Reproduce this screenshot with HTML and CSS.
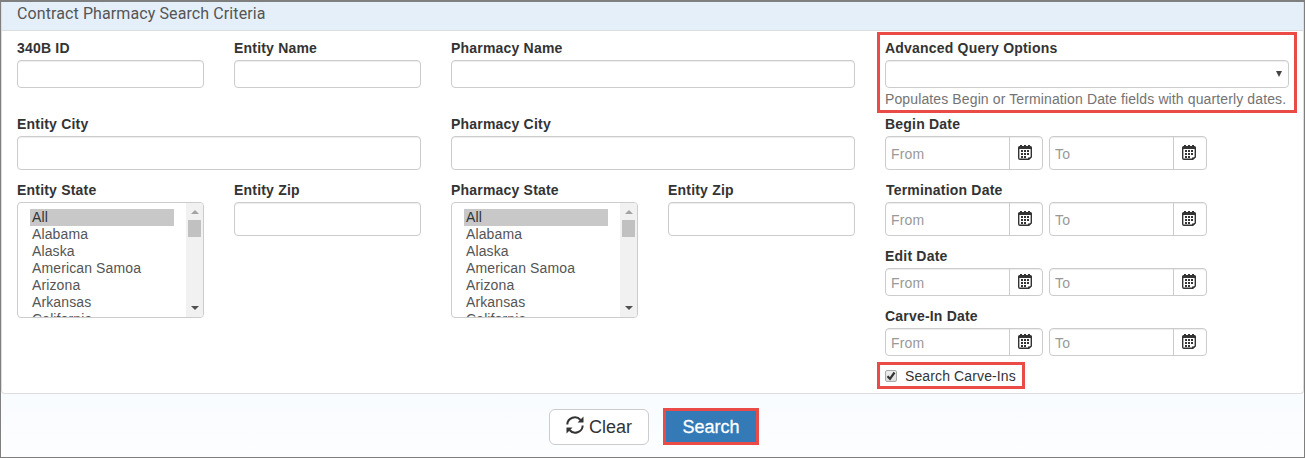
FILE: index.html
```html
<!DOCTYPE html>
<html lang="en">
<head>
    <meta charset="UTF-8">
    <meta name="viewport" content="width=device-width, initial-scale=1.0">
    <title>Contract Pharmacy Search</title>
    <link rel="stylesheet" href="styles.css">
</head>
<body>
    <svg width="0" height="0" class="defs">
        <symbol id="calendar" viewBox="0 0 14 15">
            <path fill="#333" d="M1.500 1H2V0h2v1h2V0h2v1h2V0h2v1h.5Q14 1 14 2.500V4H0V2.500Q0 1 1.500 1z"/>
            <path fill="none" stroke="#333" stroke-width="1.400" d="M.7 3v10q0 1.300 1.300 1.300h8.800L13.300 12V3"/>
            <path fill="#333" d="M10 15v-2.500h3.500z"/>
            <path fill="#333" d="M6 5h2v2H6zM9 5h2v2H9zM3 8h2v2H3zM6 8h2v2H6zM9 8h2v2H9zM3 11h2v2H3zM6 11h2v2H6z"/>
            <path fill="#333" d="M3 5h2v2H3z"/>
        </symbol>
    </svg>
    <div class="page">
        <div class="panel">
            <div class="panel-heading">Contract Pharmacy Search Criteria</div>
            <div class="panel-body">
                <div class="criteria">
                    <div class="field">
                        <label for="id340b">340B ID</label>
                        <input id="id340b" class="control small" type="text">
                    </div>
                    <div class="field">
                        <label for="entity-name">Entity Name</label>
                        <input id="entity-name" class="control small" type="text">
                    </div>
                    <div class="field wide">
                        <label for="pharmacy-name">Pharmacy Name</label>
                        <input id="pharmacy-name" class="control small" type="text">
                    </div>
                    <div class="field wide">
                        <label for="entity-city">Entity City</label>
                        <input id="entity-city" class="control" type="text">
                    </div>
                    <div class="field wide">
                        <label for="pharmacy-city">Pharmacy City</label>
                        <input id="pharmacy-city" class="control" type="text">
                    </div>
                    <div class="field">
                        <label>Entity State</label>
                        <div class="listbox">
                            <ul class="options">
                                <li class="selected">All</li>
                                <li>Alabama</li>
                                <li>Alaska</li>
                                <li>American Samoa</li>
                                <li>Arizona</li>
                                <li>Arkansas</li>
                                <li>California</li>
                            </ul>
                            <div class="scrollbar">
                                <span class="arrow-up"></span>
                                <span class="thumb"></span>
                                <span class="arrow-down"></span>
                            </div>
                        </div>
                    </div>
                    <div class="field">
                        <label for="entity-zip">Entity Zip</label>
                        <input id="entity-zip" class="control" type="text">
                    </div>
                    <div class="field">
                        <label>Pharmacy State</label>
                        <div class="listbox">
                            <ul class="options">
                                <li class="selected">All</li>
                                <li>Alabama</li>
                                <li>Alaska</li>
                                <li>American Samoa</li>
                                <li>Arizona</li>
                                <li>Arkansas</li>
                                <li>California</li>
                            </ul>
                            <div class="scrollbar">
                                <span class="arrow-up"></span>
                                <span class="thumb"></span>
                                <span class="arrow-down"></span>
                            </div>
                        </div>
                    </div>
                    <div class="field">
                        <label for="pharmacy-zip">Entity Zip</label>
                        <input id="pharmacy-zip" class="control" type="text">
                    </div>
                </div>

                <div class="dates">
                    <div class="advanced highlight">
                        <label>Advanced Query Options</label>
                        <div class="control small dropdown"><span class="caret"></span></div>
                        <p class="help">Populates Begin or Termination Date fields with quarterly dates.</p>
                    </div>
                    <div class="date-field">
                        <label>Begin Date</label>
                        <div class="date-range">
                            <div class="date-input"><input type="text" placeholder="From"><button><svg><use href="#calendar"/></svg></button></div>
                            <div class="date-input"><input type="text" placeholder="To"><button><svg><use href="#calendar"/></svg></button></div>
                        </div>
                    </div>
                    <div class="date-field">
                        <label class="nudge">Termination Date</label>
                        <div class="date-range">
                            <div class="date-input"><input type="text" placeholder="From"><button><svg><use href="#calendar"/></svg></button></div>
                            <div class="date-input"><input type="text" placeholder="To"><button><svg><use href="#calendar"/></svg></button></div>
                        </div>
                    </div>
                    <div class="date-field">
                        <label>Edit Date</label>
                        <div class="date-range short">
                            <div class="date-input"><input type="text" placeholder="From"><button><svg><use href="#calendar"/></svg></button></div>
                            <div class="date-input"><input type="text" placeholder="To"><button><svg><use href="#calendar"/></svg></button></div>
                        </div>
                    </div>
                    <div class="date-field">
                        <label>Carve-In Date</label>
                        <div class="date-range short">
                            <div class="date-input"><input type="text" placeholder="From"><button><svg><use href="#calendar"/></svg></button></div>
                            <div class="date-input"><input type="text" placeholder="To"><button><svg><use href="#calendar"/></svg></button></div>
                        </div>
                    </div>
                    <div class="carve-ins highlight">
                        <span class="checkbox">
                            <svg viewBox="0 0 10 10"><path d="M1.500 5.200L4 7.800L8.500 1.500" fill="none" stroke="#333" stroke-width="2.200"/></svg>
                        </span>
                        <span>Search Carve-Ins</span>
                    </div>
                </div>
            </div>
        </div>

        <div class="actions">
            <button class="clear-button">
                <svg viewBox="0 0 18 18">
                    <path d="M1.300 8.500A7.500 7.500 0 0 1 14.500 4M16.700 9.500A7.500 7.500 0 0 1 3.500 14" fill="none" stroke="#333" stroke-width="2"/>
                    <path d="M17.500 .5V6.500h-6zM.5 17.500V11.500h6z" fill="#333"/>
                </svg>
                <span>Clear</span>
            </button>
            <button class="search-button">Search</button>
        </div>
    </div>
</body>
</html>
```

FILE: styles.css
```css
* {
    box-sizing: border-box;
}

body {
    margin: 0;
    font-family: Arial, "Liberation Sans", sans-serif;
    font-size: 14px;
    line-height: 20px;
    letter-spacing: 0.12px;
    color: #333;
}

.defs {
    display: block;
}

.page {
    height: 458px;
    border: 1px solid #7f7f7f;
    border-top-width: 2px;
    background: linear-gradient(#f8fbff 85%, #fcfeff);
    overflow: hidden;
}

.panel {
    height: 392px;
    background-color: #fff;
    border: 1px solid #ddd;
    border-top: none;
    border-radius: 0 0 4px 4px;
}

.panel-heading {
    height: 29px;
    padding-left: 15px;
    line-height: 23px;
    font-family: Roboto, sans-serif;
    font-size: 16px;
    letter-spacing: 0.1px;
    color: #555;
    background-color: #e4eff9;
    border-bottom: 1px solid #ddd;
}

.panel-body {
    display: flex;
    gap: 30px;
    padding: 7px 14px 0 15px;
}

.criteria {
    display: grid;
    grid-template-columns: repeat(4, 187px);
    grid-template-rows: 76px 66px 138px;
    column-gap: 30px;
}

.wide {
    grid-column: span 2;
}

label {
    display: block;
    height: 20px;
    margin-bottom: 2px;
    font-weight: bold;
    letter-spacing: 0.2px;
    white-space: nowrap;
}

.nudge {
    padding-left: 1px;
}

.control {
    display: block;
    width: 100%;
    height: 34px;
    background-color: #fff;
    border: 1px solid #ccc;
    border-radius: 4px;
    box-shadow: inset 0 1px 1px rgba(0, 0, 0, 0.075);
}

.small {
    height: 28px;
}

.listbox {
    display: flex;
    justify-content: space-between;
    height: 116px;
    border: 1px solid #ccc;
    border-radius: 4px;
    overflow: hidden;
}

.options {
    width: 144px;
    margin: 6px 0 0 12px;
    padding: 0;
    list-style: none;
    line-height: 17px;
    color: #555;
}

.options li {
    height: 17px;
    padding-left: 2px;
}

.options .selected {
    color: #333;
    background-color: #c8c8c8;
}

.scrollbar {
    display: flex;
    flex-direction: column;
    align-items: center;
    width: 17px;
    background-color: #f1f1f1;
}

.arrow-up,
.arrow-down {
    border: 4px solid transparent;
}

.arrow-up {
    margin: 7px 0 6px;
    border-bottom-color: #a3a3a3;
    border-top-width: 0;
}

.thumb {
    width: 13px;
    height: 17px;
    background-color: #c1c1c1;
}

.arrow-down {
    margin: auto 0 7px;
    border-top-color: #505050;
    border-bottom-width: 0;
}

.dates {
    width: 404px;
}

.highlight {
    border: 3px solid #ea4b46;
}

.advanced {
    height: 81px;
    margin: -6px -8px 1px;
    padding: 3px 5px 0;
}

.dropdown {
    display: flex;
    align-items: center;
    justify-content: flex-end;
    padding-right: 6px;
}

.caret {
    border: 3px solid transparent;
    border-top: 6px solid #444;
    border-bottom: 0;
}

.help {
    margin: 1px 0 0;
    color: #737373;
    white-space: nowrap;
}

.date-field {
    margin-bottom: 10px;
}

.date-range {
    display: flex;
    gap: 6px;
    height: 34px;
}

.short {
    height: 28px;
}

.date-input {
    display: flex;
    width: 158px;
    border: 1px solid #ccc;
    border-radius: 4px;
    box-shadow: inset 0 1px 1px rgba(0, 0, 0, 0.075);
}

.date-input input {
    width: 123px;
    padding: 1px 5px 0;
    border: none;
    background: none;
    font: inherit;
    letter-spacing: 0.2px;
}

.date-input input::placeholder {
    color: #999;
}

.date-input button {
    display: flex;
    flex: 1;
    align-items: center;
    justify-content: center;
    padding: 0 3px 1px 0;
    background: none;
    border: none;
    border-left: 1px solid #ccc;
}

.date-input svg {
    width: 14px;
    height: 15px;
}

.carve-ins {
    display: flex;
    align-items: center;
    width: 148px;
    height: 27px;
    margin: -4px 0 0 -8px;
    padding-left: 5px;
    white-space: nowrap;
}

.checkbox {
    display: flex;
    width: 12px;
    height: 12px;
    margin-right: 8px;
    background: linear-gradient(#eee, #ddd);
    border: 1px solid #aaa;
    border-radius: 2px;
}

.actions {
    display: flex;
    gap: 14px;
    padding: 14px 0 0 548px;
}

.actions button {
    font-family: inherit;
    font-size: 18px;
}

.clear-button {
    display: flex;
    align-items: center;
    justify-content: center;
    gap: 5px;
    width: 100px;
    height: 36px;
    margin-top: 1px;
    padding: 0;
    color: #333;
    background-color: #fff;
    border: 1px solid #ccc;
    border-radius: 6px;
}

.clear-button svg {
    width: 18px;
    height: 18px;
    margin-bottom: 4px;
}

.search-button {
    width: 96px;
    height: 37px;
    padding: 1px 0 0;
    color: #fff;
    background-color: #337ab7;
    border: 3px solid #ea4b46;
    -webkit-text-stroke: 0.3px #fff;
}
```
